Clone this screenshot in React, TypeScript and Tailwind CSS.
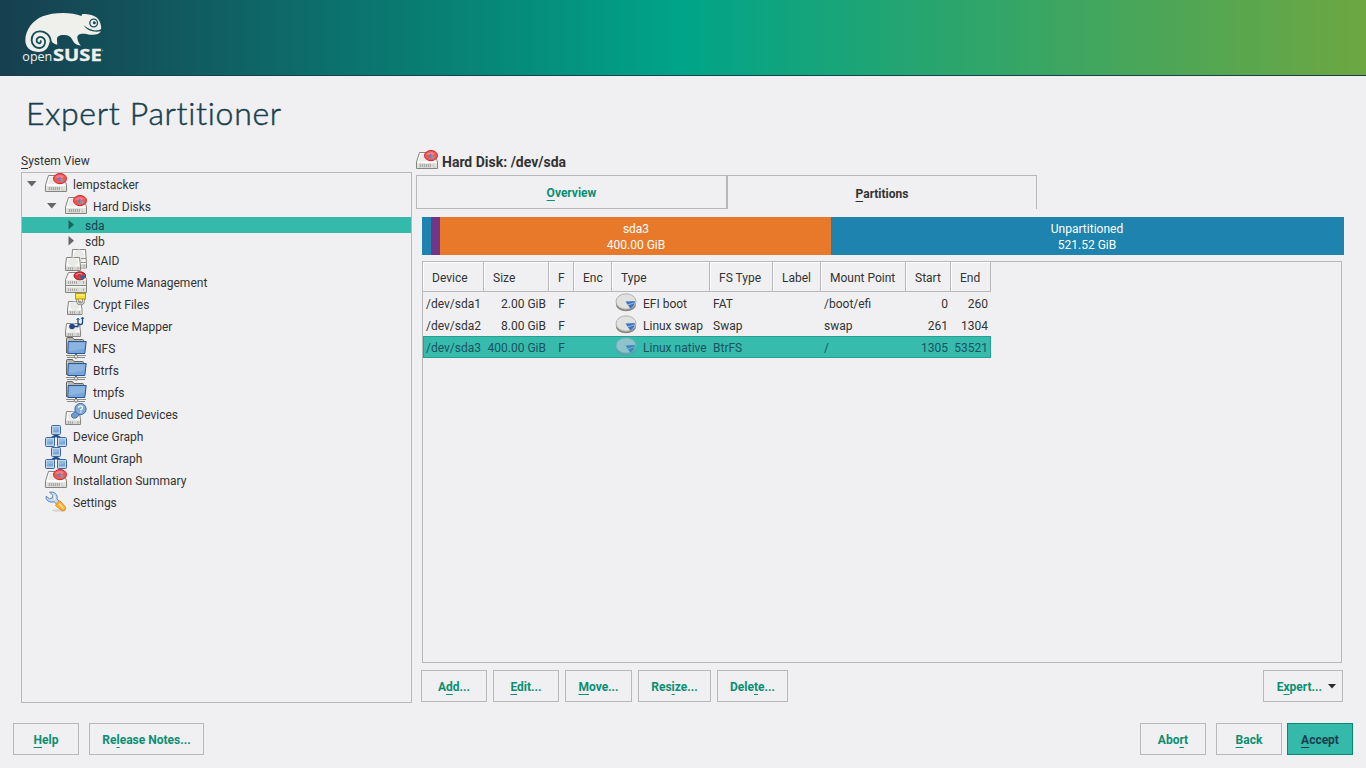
import type { ReactNode } from 'react';

function Mn({ text, at }: { text: string; at: number }) {
  return (
    <span className="whitespace-pre">
      {text.slice(0, at)}
      <span className="underline decoration-1 underline-offset-[3px] [text-decoration-skip-ink:none]">{text[at]}</span>
      {text.slice(at + 1)}
    </span>
  );
}

function Svg({ children }: { children: ReactNode }) {
  return (
    <svg width="22" height="22" viewBox="0 0 22 22" className="block shrink-0">
      {children}
    </svg>
  );
}

function Pie({ small = false }: { small?: boolean }) {
  return small ? (
    <g>
      <ellipse cx="14.8" cy="4.8" rx="5.8" ry="4" fill="#dc3940" stroke="#a31920" />
      <path d="M14.8 4.500h5.500c0 2-1.500 4-4 4.200z" fill="#3465a4" />
      <path d="M11 3.500q3-2 6-.5" fill="none" stroke="#f59a9a" />
    </g>
  ) : (
    <g>
      <ellipse cx="15" cy="5.600" rx="6.500" ry="5.100" fill="#f25555" stroke="#d3252b" />
      <path d="M10 4.500Q12 1.800 16 2l3 1.200-2 2z" fill="#f58084" />
      <path d="M14.500 3.500l3.400 2.500 1.600.7-1.500 2-4 .3-1-2.800z" fill="#a583a5" />
      <path d="M13.600 4.400h1.600v3.400h-1.600z" fill="#4c83c4" />
      <path d="M16 6.300l2.500.7-1.500 1.500z" fill="#8dad58" />
    </g>
  );
}

function DiskIcon() {
  return (
    <Svg>
      <path d="M3.500 2.500h15L21.500 12v6.500h-21V12z" fill="#f9f9f7" stroke="#85857f" />
      <path d="M5 4h7.500L16 11H3z" fill="#eaeae7" />
      <path d="M1 12.500h20V18H1z" fill="#e2e2df" />
      <path d="M1 12.500h20" stroke="#fff" />
      <path d="M3 14h12v3.500H3z" fill="#cfcfcc" />
      <path d="M4.500 14v3M6.500 14v3M8.500 14v3M10.500 14v3M12.500 14v3M14.500 14v3" stroke="#aaa" />
      <path d="M17 14v3h2.500" fill="none" stroke="#c4c4c1" />
      <Pie />
    </Svg>
  );
}

function SmallDisk({ x = 0, y = 0, w = 15, h = 12 }: { x?: number; y?: number; w?: number; h?: number }) {
  return (
    <g transform={`translate(${x} ${y})`}>
      <path d={`M1.5 .5h${w - 3}l1 ${h - 5}v4.5h-${w - 1}v-4.5z`} fill="#f9f9f7" stroke="#868681" />
      <ellipse cx={w / 2} cy={(h - 4) / 2} rx={w / 2 - 3} ry={(h - 5) / 2} fill="#e9e9e6" />
      <path d={`M1 ${h - 4}h${w - 2}v3.5H1z`} fill="#d6d6d3" />
      <path d={`M3.5 ${h - 3.2}v2.4M5.500 ${h - 3.2}v2.4M7.500 ${h - 3.2}v2.4M${w - 3} ${h - 3.2}v2.4`} stroke="#a2a2a0" />
    </g>
  );
}

function RaidIcon() {
  return (
    <Svg>
      <SmallDisk x={6} y={0} w={16} h={19} />
      <path d="M16 9.500h5M16 13.500h5" stroke="#94948f" />
      <SmallDisk x={0} y={8} w={16} h={13.500} />
    </Svg>
  );
}

function VolumeIcon() {
  return (
    <Svg>
      <path d="M3.500 1.500h15l3 7v13h-21V8.500z" fill="#f5f5f3" stroke="#85857f" />
      <path d="M1 9.500h20v4H1zM1 16.500h20V21H1z" fill="#dcdcd9" />
      <path d="M1 14.500h20" stroke="#858580" />
      <path d="M3.500 10v3M5.500 10v3M7.500 10v3M9.500 10v3M11.500 10v3M3.500 17.500v2.500M5.500 17.500v2.500M7.500 17.500v2.500M9.500 17.500v2.500M11.500 17.500v2.500M18.500 10v3M18.500 17.500v2.500" stroke="#a9a9a5" />
      <Pie small />
    </Svg>
  );
}

function CryptIcon() {
  return (
    <Svg>
      <SmallDisk x={2} y={8} w={15.500} h={13.500} />
      <path d="M12.500 5.500v2q0 3.500 3 3.500t3-3.500v-2" fill="none" stroke="#7c7c77" strokeWidth="2.600" />
      <path d="M12.500 5.500v2q0 3.500 3 3.500t3-3.500v-2" fill="none" stroke="#dededb" strokeWidth="1.200" />
      <rect x="10.500" y=".5" width="10" height="5.500" fill="#f5e136" stroke="#b39b00" />
      <path d="M11.500 2h8" stroke="#fff69e" />
    </Svg>
  );
}

function MapperIcon() {
  return (
    <Svg>
      <SmallDisk x={0} y={8} w={16} h={13.500} />
      <circle cx="7" cy="11.500" r="2.800" fill="#204a87" />
      <path d="M7 11.500h6V3.500M17.500 2.500v5q0 2-2 2h-2" fill="none" stroke="#204a87" strokeWidth="1.300" />
      <path d="M11.500 5l1.500-2 1.500 2M16 4l1.500-2L19 4" fill="none" stroke="#3465a4" />
    </Svg>
  );
}

function FolderIcon() {
  return (
    <Svg>
      <path d="M1.500 16V1.500q0-1 1-1h4.500q1 0 1.500 1.200l.5.800h8.500q1 0 1 1V8" fill="#b5b6b3" stroke="#63645f" />
      <path d="M2.500 2.500v12" stroke="#deded9" />
      <path d="M3.200 4.500h18l-1.400 12h-17z" fill="#78a6d9" stroke="#2a5791" />
      <path d="M4.200 5.500H20l-.7 6-15.500 3z" fill="#8cb4e0" />
      <path d="M1 18.500h8M13 18.500h8M2 20.500h7M13 20.500h7" stroke="#8b8c88" />
      <path d="M11 17v1.500" stroke="#555753" strokeWidth="2" />
      <circle cx="11" cy="19.500" r="1.700" fill="#f1f1ef" stroke="#666864" />
    </Svg>
  );
}

function UnusedIcon() {
  return (
    <Svg>
      <SmallDisk x={0} y={8} w={16} h={13.500} />
      <path d="M6.500 11.500l5-4 4 3.500-4.500 4H8q-2-1-1.500-3.500z" fill="#6f9bcd" stroke="#4775aa" />
      <circle cx="15.500" cy="6" r="5.600" fill="#81abd9" stroke="#3d6da6" />
      <path d="M13.600 4.800q.2-1.900 2-1.900t2 1.600-1.900 2.200v.8" fill="none" stroke="#fff" strokeWidth="1.300" />
      <path d="M15 9h1.500" stroke="#fff" strokeWidth="1.200" />
    </Svg>
  );
}

function GraphIcon() {
  return (
    <Svg>
      <path d="M11 9v5M11 10.500L6 13.500M11 10.500l5 3" stroke="#204a87" strokeWidth="2.500" />
      <path d="M9.800 13.500L11 11.500l1.200 2V19H9.800z" fill="#fff" />
      {[
        [6.500, 0.500],
        [0.500, 12.500],
        [12.500, 12.500],
      ].map(([x, y]) => (
        <g key={x} transform={`translate(${x} ${y})`}>
          <rect width="9" height="9" rx="1" fill="#bfd5ec" stroke="#3a669e" />
          <path d="M1.500 1.500h6v5.500h-6z" fill="#79a6d8" />
          <path d="M1.500 1.500h6v2l-6 2z" fill="#95bae2" />
        </g>
      ))}
    </Svg>
  );
}

function SettingsIcon() {
  return (
    <Svg>
      <ellipse cx="14" cy="19.500" rx="7" ry="1.300" fill="#d7d7d7" />
      <path d="M4.500 1.200Q8 .3 10.500 2.500T12 8l4 4-2.700 2.800-4.200-4Q5.700 12 3 10T1.200 5.200l3.300 2.600L7.300 7l.6-2.700z" fill="#c7dcf2" stroke="#5e85b1" />
      <path d="M9 4.500q1.500 2 .5 4.500" fill="none" stroke="#fff" />
      <path d="M12.700 11.300l2.300-1.500 5 5.700q1.500 2.500-.3 3.800t-3.800-.4L10.500 14.500z" fill="#fbb13c" stroke="#ec870f" />
      <path d="M14 12.500l4.500 5" stroke="#fddc91" strokeWidth="1.500" />
    </Svg>
  );
}

function PartitionIcon({ selected = false }: { selected?: boolean }) {
  return (
    <Svg>
      <ellipse cx="11" cy="12" rx="10.200" ry="7.300" fill={selected ? '#5c9fac' : '#858681'} />
      <ellipse cx="11" cy="9.500" rx="10" ry="7.700" fill={selected ? '#8fc3cb' : '#e1e2df'} stroke={selected ? '#6daebb' : '#b2b3af'} />
      <path d="M10.500 9.500l9.300-.5q.5 5-4.500 7.500z" fill={selected ? '#3787ba' : '#3e76bd'} />
      <path d="M12.700 12.700q3.500-.5 6.300-1.900" fill="none" stroke={selected ? '#75b5d5' : '#9bbde3'} />
    </Svg>
  );
}

function Logo() {
  return (
    <svg width="90" height="60" viewBox="54 24 270 180" className="block" fontFamily="'Open Sans', sans-serif">
      <path
        d="M76 121C76 91 97 62 128 49C159 36 215 35 244 48L247 42C275 42 291 49 298 62C304 75 304 83 303 88L294 91C279 93 266 88 251 76C262 93 281 98 303 94C297 105 279 107 259 102C242 99 231 104 232 113C233 124 238 131 243 137C228 134 222 130 217 119C212 109 204 105 190 105C174 105 170 112 171 121L172 134C161 131 155 126 151 119C150 124 149 128 147 132C143 147 132 157 114 156C91 155 76 143 76 121Z"
        fill="#efefec"
      />
      <path d="M152 130C154 110 140 95 120 94C104 93 94 106 95 122C96 136 108 145 120 144C131 143 137 133 135 122C133 112 122 108 114 113C107 118 109 129 117 130C122 130 124 125 121 121" fill="none" stroke="#154e58" strokeWidth="5.500" />
      <circle cx="281" cy="69" r="11.500" fill="none" stroke="#154e58" strokeWidth="4" />
      <circle cx="283" cy="68" r="4.500" fill="#154e58" />
      <text x="67" y="184" fontSize="38" textLength="90" lengthAdjust="spacingAndGlyphs" fill="#efefec">open</text>
      <text x="159" y="184" fontSize="48" fontWeight="700" textLength="146" lengthAdjust="spacingAndGlyphs" fill="#efefec" stroke="#efefec" strokeWidth="1">SUSE</text>
      <circle cx="308" cy="151" r="1.500" fill="#b8cccd" />
    </svg>
  );
}

function Arrow({ open }: { open: boolean }) {
  return (
    <svg width="10" height="10" viewBox="0 0 10 10" className="block shrink-0" fill="currentColor">
      {open ? <path d="M0 2h9.500L4.750 7.500z" /> : <path d="M2.500 0v9.500L8 4.750z" />}
    </svg>
  );
}

type TreeItem = { label: string; icon: () => ReactNode; child?: boolean };

const TREE: TreeItem[] = [
  { label: 'RAID', icon: RaidIcon, child: true },
  { label: 'Volume Management', icon: VolumeIcon, child: true },
  { label: 'Crypt Files', icon: CryptIcon, child: true },
  { label: 'Device Mapper', icon: MapperIcon, child: true },
  { label: 'NFS', icon: FolderIcon, child: true },
  { label: 'Btrfs', icon: FolderIcon, child: true },
  { label: 'tmpfs', icon: FolderIcon, child: true },
  { label: 'Unused Devices', icon: UnusedIcon, child: true },
  { label: 'Device Graph', icon: GraphIcon },
  { label: 'Mount Graph', icon: GraphIcon },
  { label: 'Installation Summary', icon: DiskIcon },
  { label: 'Settings', icon: SettingsIcon },
];

function Tree() {
  return (
    <div className="h-[531px] border border-[#b8b8bb]">
      <div className="flex h-[22px] items-center pl-[5px] text-[#666]">
        <Arrow open />
        <div className="ml-2 flex items-center gap-1.5">
          <DiskIcon />
          <span className="pt-0.5 text-[#333]">lempstacker</span>
        </div>
      </div>
      <div className="flex h-[22px] items-center pl-[25px] text-[#666]">
        <Arrow open />
        <div className="ml-2 flex items-center gap-1.5">
          <DiskIcon />
          <span className="pt-0.5 text-[#333]">Hard Disks</span>
        </div>
      </div>
      <div className="flex h-4 items-center gap-[9px] bg-[#35b9ab] pl-11 text-[#186657]">
        <Arrow open={false} />
        <span className="pt-0.5 text-[#173f4f]">sda</span>
      </div>
      <div className="flex h-4 items-center gap-[9px] pl-11 text-[#666]">
        <Arrow open={false} />
        <span className="pt-0.5 text-[#333]">sdb</span>
      </div>
      {TREE.map(({ label, icon: Icon, child }) => (
        <div key={label} className={`flex h-[22px] items-center gap-1.5 ${child ? 'pl-[43px]' : 'pl-[23px]'}`}>
          <Icon />
          <span className="pt-0.5">{label}</span>
        </div>
      ))}
    </div>
  );
}

function Button({ text, at, width, primary = false, menu = false }: { text: string; at: number; width: string; primary?: boolean; menu?: boolean }) {
  return (
    <button
      className={`flex h-8 shrink-0 items-center border pt-0.5 font-bold ${width} ${menu ? 'justify-end pr-1.5' : 'justify-center'} ${
        primary ? 'border-[#008a70] bg-[#35b9ab] text-[#173f4f]' : 'border-[#b8b8bb] text-[#0a8f73]'
      }`}
    >
      <Mn text={text} at={at} />
      {menu && (
        <svg width="8" height="5" viewBox="0 0 8 5" className="mb-0.5 ml-1.5 block fill-[#2b2b2b]">
          <path d="M0 0h8L4 4.500z" />
        </svg>
      )}
    </button>
  );
}

const COLS = 'grid grid-cols-[61px_65px_25px_38px_98px_63px_48px_85px_45px_40px]';
const HEADERS = ['Device', 'Size', 'F', 'Enc', 'Type', 'FS Type', 'Label', 'Mount Point', 'Start', 'End'];
const ROWS = [
  ['/dev/sda1', '2.00 GiB', 'EFI boot', 'FAT', '/boot/efi', '0', '260'],
  ['/dev/sda2', '8.00 GiB', 'Linux swap', 'Swap', 'swap', '261', '1304'],
  ['/dev/sda3', '400.00 GiB', 'Linux native', 'BtrFS', '/', '1305', '53521'],
];

function PartitionTable() {
  return (
    <div className="ml-1.5 mt-1.5 h-[402px] w-[920px] border border-[#b8b8bb]">
      <div className={`${COLS} h-[30px] w-[568px]`}>
        {HEADERS.map((h) => (
          <div key={h} className="flex items-center whitespace-nowrap border-b border-r border-[#b8b8bb] pl-2 pt-0.5 shadow-[inset_1px_1px_0_#fff]">
            <span className="pl-px">{h}</span>
          </div>
        ))}
      </div>
      {ROWS.map(([dev, size, type, fs, mount, start, end], i) => {
        const sel = i === 2;
        return (
          <div
            key={dev}
            className={`${COLS} h-[22px] w-[568px] items-start whitespace-nowrap leading-[22px] ${
              sel ? 'bg-[#36bbad] text-[#175462] shadow-[inset_0_0_0_1px_#26a092]' : ''
            }`}
          >
            <span className="pl-[3px] pt-px">{dev}</span>
            <span className="pr-[3px] pt-px text-right">{size}</span>
            <span className="pt-px text-center">F</span>
            <span />
            <span className="flex items-start gap-1.5 pl-[3px]">
              <PartitionIcon selected={sel} />
              <span className="pt-px">{type}</span>
            </span>
            <span className="pl-[3px] pt-px">{fs}</span>
            <span />
            <span className="pl-[3px] pt-px">{mount}</span>
            <span className="pr-[3px] pt-px text-right">{start}</span>
            <span className="pr-[3px] pt-px text-right">{end}</span>
          </div>
        );
      })}
    </div>
  );
}

export default function App() {
  return (
    <div className="flex h-[768px] w-[1366px] flex-col overflow-hidden bg-[#f0f0f2] font-[Roboto,sans-serif] text-xs leading-4 text-[#333]">
      <header className="h-[76px] shrink-0 border-b border-[#173f4f] bg-[linear-gradient(to_right,#173f4f,#00a489,#6da741)] pl-[18px] pt-2">
        <Logo />
      </header>
      <h1 className="h-[73px] shrink-0 whitespace-nowrap pl-[26px] pt-[17px] font-[Lato,sans-serif] text-[32px] font-light leading-10 tracking-[0.7px] text-[#173f4f] [-webkit-text-stroke:0.5px_#173f4f]">
        Expert Partitioner
      </h1>
      <main className="flex h-[554px] shrink-0 pl-[21px]">
        <section className="w-[391px]">
          <div className="h-[23px] pt-1">
            <Mn text="System View" at={0} />
          </div>
          <Tree />
        </section>
        <section className="ml-1 w-[930px]">
          <div className="flex h-[26px] items-start gap-1">
            <div className="pt-px">
              <DiskIcon />
            </div>
            <h2 className="pt-[5px] text-sm font-bold leading-4">Hard Disk: /dev/sda</h2>
          </div>
          <div className="flex h-[34px] font-bold">
            <div className="flex w-[311px] items-center justify-center border border-[#b8b8bb] pt-0.5 text-[#0a8f73]">
              <Mn text="Overview" at={0} />
            </div>
            <div className="flex w-[310px] items-center justify-center border-x border-t border-[#b8b8bb] pt-[3px]">
              <Mn text="Partitions" at={0} />
            </div>
          </div>
          <div className="ml-1.5 mt-2 flex h-[38px] w-[922px] text-center text-white">
            <div className="w-[9px] bg-[#1e83ae]" />
            <div className="w-[9px] bg-[#71368a]" />
            <div className="w-[391px] bg-[#e8792b] pl-px pt-1">
              <p>sda3</p>
              <p>400.00 GiB</p>
            </div>
            <div className="w-[513px] bg-[#1e83ae] pr-px pt-1">
              <p>Unpartitioned</p>
              <p>521.52 GiB</p>
            </div>
          </div>
          <PartitionTable />
          <div className="ml-[5px] mt-[7px] flex w-[922px] gap-1.5">
            <Button text="Add..." at={1} width="w-[66px]" />
            <Button text="Edit..." at={0} width="w-[66px]" />
            <Button text="Move..." at={0} width="w-[67px]" />
            <Button text="Resize..." at={3} width="w-[73px]" />
            <Button text="Delete..." at={4} width="w-[71px]" />
            <div className="flex-1" />
            <Button text="Expert..." at={1} width="w-[80px]" menu />
          </div>
        </section>
      </main>
      <footer className="flex shrink-0 pl-[13px] pr-[13px] pt-5">
        <Button text="Help" at={0} width="w-[66px]" />
        <div className="w-2.5" />
        <Button text="Release Notes..." at={2} width="w-[115px]" />
        <div className="flex-1" />
        <Button text="Abort" at={3} width="w-[66px]" />
        <div className="w-2.5" />
        <Button text="Back" at={0} width="w-[66px]" />
        <div className="w-[5px]" />
        <Button text="Accept" at={0} width="w-[66px]" primary />
      </footer>
    </div>
  );
}
